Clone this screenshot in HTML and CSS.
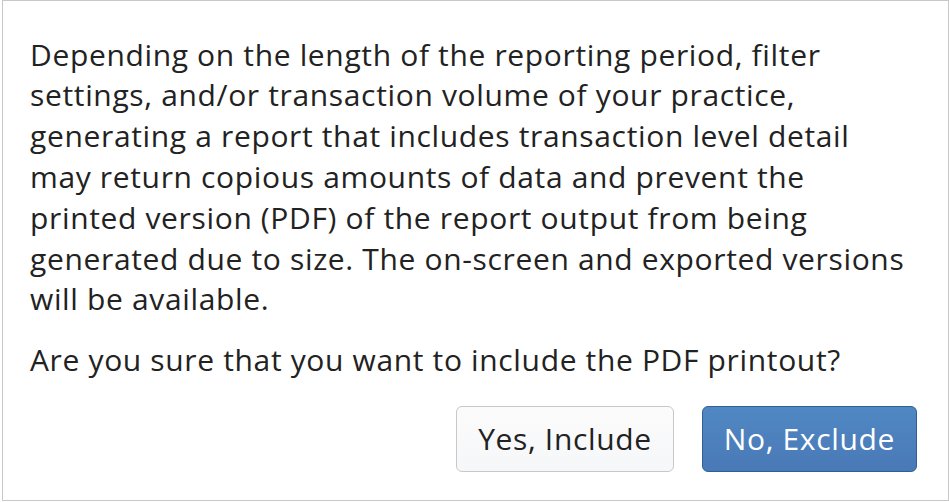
FILE: index.html
```html
<!DOCTYPE html>
<html lang="en">
<head>
    <meta charset="UTF-8">
    <meta name="viewport" content="width=device-width, initial-scale=1.0">
    <title>Include PDF printout</title>
    <link rel="stylesheet" href="styles.css">
</head>
<body>
    <div class="dialog">
        <p>Depending on the length of the reporting period, filter settings, and/or transaction volume of your practice, generating a report that includes transaction level detail may return copious amounts of data and prevent the printed version (PDF) of the report output from being generated due to size. The on-screen and exported versions will be available.</p>
        <p>Are you sure that you want to include the PDF printout?</p>
        <div class="actions">
            <button type="button" class="btn btn-default">Yes, Include</button>
            <button type="button" class="btn btn-primary">No, Exclude</button>
        </div>
    </div>
</body>
</html>
```

FILE: styles.css
```css
body {
    margin: 0;
    background: white;
    font-family: "Open Sans", "Noto Sans", sans-serif;
}
.dialog {
    box-sizing: border-box;
    width: 947px;
    height: 501px;
    margin-left: 2px;
    border: 1px solid #c8c8c8;
    padding: 33.6px 30px 28px 27px;
    color: #222;
    font-size: 30px;
    line-height: 40.8px;
    letter-spacing: 0.65px;
}
.dialog p {
    margin: 0 0 20px 0;
}
.actions {
    display: flex;
    justify-content: flex-end;
    gap: 28px;
    padding-top: 5px;
    margin-right: 1px;
}
.btn {
    box-sizing: border-box;
    height: 66px;
    padding: 0 21px;
    border-radius: 6px;
    font-family: inherit;
    font-size: 30px;
    letter-spacing: 0.65px;
    cursor: pointer;
}
.btn-default {
    background: linear-gradient(#fbfbfc, #f6f7f8);
    border: 1px solid #c8c8c8;
    color: #222;
}
.btn-primary {
    background: linear-gradient(#5088c3, #4979b6);
    border: 1px solid #2f5f93;
    color: white;
}
```
